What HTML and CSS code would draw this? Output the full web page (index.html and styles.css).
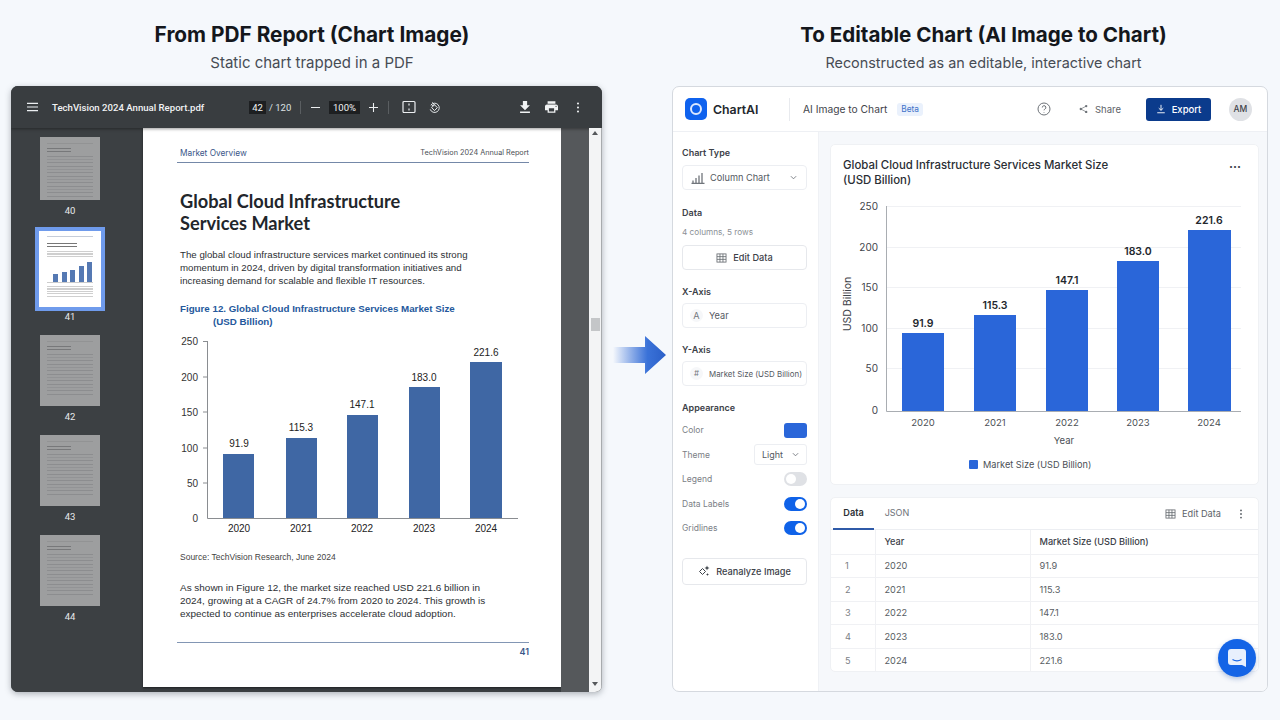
FILE: index.html

```html
<!DOCTYPE html>
<html lang="en">
<head>
  <meta charset="UTF-8">
  <title>From PDF Report to Editable Chart</title>
  <link rel="stylesheet" href="styles.css">
</head>
<body>
  <!-- Headings -->
  <div class="heads">
    <div class="head head-left">
      <h1>From PDF Report (Chart Image)</h1>
      <p>Static chart trapped in a PDF</p>
    </div>
    <div class="head head-right">
      <h1>To Editable Chart (AI Image to Chart)</h1>
      <p>Reconstructed as an editable, interactive chart</p>
    </div>
  </div>

  <div class="stage">
    <!-- PDF viewer -->
    <div class="viewer">
      <div class="viewer-bar">
        <svg class="menu-icon" viewBox="0 0 12 10"><path d="M0 1h12M0 5h12M0 9h12"/></svg>
        <span class="doc-name">TechVision 2024 Annual Report.pdf</span>
        <span class="page-box">42</span>
        <span class="page-total">/ 120</span>
        <span class="bar-sep"></span>
        <svg class="bar-icon minus" viewBox="0 0 10 10"><path d="M0 5h10"/></svg>
        <span class="zoom-box">100%</span>
        <svg class="bar-icon plus" viewBox="0 0 10 10"><path d="M0 5h10M5 0v10"/></svg>
        <span class="bar-sep sep-two"></span>
        <svg class="fit-icon" viewBox="0 0 14 14"><rect x="1" y="1.500" width="12" height="11" rx="1"/><path d="M7 3.500v2M7 8.500v2"/></svg>
        <svg class="rotate-icon" viewBox="0 0 14 14"><path d="M3 4.500a5 5 0 1 1-.6 4.500"/><path d="M4.500 1.500L7 3.800 4 5.200"/><rect x="4.800" y="5" width="4.400" height="4.400" transform="rotate(45 7 7.200)"/></svg>
        <div class="bar-right">
          <svg class="fill-icon" viewBox="5 3 14 17"><path d="M19 9h-4V3H9v6H5l7 7 7-7zM5 18v2h14v-2H5z"/></svg>
          <svg class="fill-icon print" viewBox="2 3 20 18"><path d="M19 8H5c-1.660 0-3 1.340-3 3v6h4v4h12v-4h4v-6c0-1.660-1.340-3-3-3zm-3 11H8v-5h8v5zm3-7c-.550 0-1-.450-1-1s.450-1 1-1 1 .450 1 1-.450 1-1 1zm-1-9H6v4h12V3z"/></svg>
          <svg class="fill-icon dots" viewBox="0 0 4 14"><circle cx="2" cy="2" r="1.300"/><circle cx="2" cy="7" r="1.300"/><circle cx="2" cy="12" r="1.300"/></svg>
        </div>
      </div>

      <div class="viewer-body">
        <!-- Thumbnails -->
        <div class="thumbs">
          <div class="thumb-item first">
            <div class="thumb"><span class="thumb-head"></span><span class="thumb-title"></span><span class="thumb-lines"></span></div>
            <span class="thumb-num">40</span>
          </div>
          <div class="thumb-item selected">
            <div class="thumb-sel">
              <span class="mini-head"></span>
              <span class="mini-title"></span>
              <span class="mini-text"></span>
              <div class="mini-bars">
                <i class="mb1"></i><i class="mb2"></i><i class="mb3"></i><i class="mb4"></i><i class="mb5"></i>
              </div>
              <span class="mini-text"></span>
            </div>
            <span class="thumb-num">41</span>
          </div>
          <div class="thumb-item">
            <div class="thumb"><span class="thumb-head"></span><span class="thumb-title"></span><span class="thumb-lines"></span></div>
            <span class="thumb-num">42</span>
          </div>
          <div class="thumb-item">
            <div class="thumb"><span class="thumb-head"></span><span class="thumb-title"></span><span class="thumb-lines"></span></div>
            <span class="thumb-num">43</span>
          </div>
          <div class="thumb-item">
            <div class="thumb"><span class="thumb-head"></span><span class="thumb-title"></span><span class="thumb-lines"></span></div>
            <span class="thumb-num">44</span>
          </div>
        </div>

        <!-- PDF page -->
        <div class="pdf-page">
          <div class="pdf-head">
            <span class="pdf-section">Market Overview</span>
            <span class="pdf-runner">TechVision 2024 Annual Report</span>
          </div>
          <div class="pdf-content">
            <h2>Global Cloud Infrastructure<br>Services Market</h2>
            <p class="pdf-text">The global cloud infrastructure services market continued its strong<br>momentum in 2024, driven by digital transformation initiatives and<br>increasing demand for scalable and flexible IT resources.</p>
            <h3>Figure 12. Global Cloud Infrastructure Services Market Size<br><span class="fig-indent">(USD Billion)</span></h3>
            <svg class="pdf-chart" viewBox="175 335 350 205">
              <path class="pdf-axis" d="M207.500 341V518.500H518M203 341.500h4M203 377h4M203 412h4M203 448h4M203 483h4"/>
              <g class="pdf-ticks">
                <text x="198" y="345">250</text>
                <text x="198" y="381">200</text>
                <text x="198" y="416">150</text>
                <text x="198" y="452">100</text>
                <text x="198" y="487">50</text>
                <text x="198" y="522">0</text>
              </g>
              <g class="pdf-bars">
                <rect x="223" y="454" width="31" height="64"/>
                <rect x="286" y="438" width="31" height="80"/>
                <rect x="347" y="415" width="31" height="103"/>
                <rect x="409" y="387" width="31" height="131"/>
                <rect x="470" y="362" width="32" height="156"/>
              </g>
              <g class="pdf-labels">
                <text x="239" y="447">91.9</text>
                <text x="301" y="431">115.3</text>
                <text x="362" y="408">147.1</text>
                <text x="424" y="381">183.0</text>
                <text x="486" y="356">221.6</text>
                <text x="239" y="532">2020</text>
                <text x="301" y="532">2021</text>
                <text x="362" y="532">2022</text>
                <text x="424" y="532">2023</text>
                <text x="486" y="532">2024</text>
              </g>
            </svg>
            <p class="pdf-source">Source: TechVision Research, June 2024</p>
            <p class="pdf-text">As shown in Figure 12, the market size reached USD 221.6 billion in<br>2024, growing at a CAGR of 24.7% from 2020 to 2024. This growth is<br>expected to continue as enterprises accelerate cloud adoption.</p>
          </div>
          <div class="pdf-foot">41</div>
        </div>

        <div class="gutter"></div>

        <div class="scrollbar">
          <span class="arrow-up"></span>
          <span class="scroll-thumb"></span>
          <span class="arrow-down"></span>
        </div>
      </div>
    </div>

    <!-- Arrow between the two -->
    <svg class="big-arrow" viewBox="0 0 53 38">
      <defs>
        <linearGradient id="arrow-fade" x1="0" x2="1" y1="0" y2="0">
          <stop offset="0" stop-color="#2f69d6" stop-opacity="0"/>
          <stop offset="0.65" stop-color="#3a72d8"/>
          <stop offset="1" stop-color="#2a5fc8"/>
        </linearGradient>
      </defs>
      <path fill="url(#arrow-fade)" d="M0 11H32V0L53 19 32 38V27H0Z"/>
    </svg>

    <!-- ChartAI app -->
    <div class="app">
      <div class="app-bar">
        <div class="logo"><span class="logo-ring"></span></div>
        <span class="brand">ChartAI</span>
        <span class="app-sep"></span>
        <span class="app-title">AI Image to Chart</span>
        <span class="beta">Beta</span>
        <div class="app-actions">
          <svg class="help" viewBox="0 0 14 14"><circle cx="7" cy="7" r="6"/><path d="M5.300 5.500a1.800 1.800 0 1 1 2.600 1.600c-.6.300-.9.600-.9 1.200M7 10v.6"/></svg>
          <svg class="share-icon" viewBox="0 0 10 10"><path class="share-line" d="M8 1.800L2 5l6 3.200"/><circle cx="8" cy="1.800" r="1.300"/><circle cx="2" cy="5" r="1.300"/><circle cx="8" cy="8.200" r="1.300"/></svg>
          <span class="share">Share</span>
          <button class="export">
            <svg viewBox="0 0 12 12"><path d="M6 1v6.500M3.300 5L6 7.600 8.700 5M1.500 10.500h9"/></svg>
            Export
          </button>
          <span class="avatar">AM</span>
        </div>
      </div>

      <div class="app-body">
        <!-- Settings -->
        <div class="side">
          <div class="side-label">Chart Type</div>
          <div class="field field-select">
            <svg class="col-icon" viewBox="0 0 13 12"><path d="M1.500 11V8.500M4.500 11V6M7.500 11V3.500M10.500 11V1"/><path d="M0 11.500h13"/></svg>
            <span>Column Chart</span>
            <svg class="chev" viewBox="0 0 8 5"><path d="M1 1l3 3 3-3"/></svg>
          </div>
          <div class="side-label label-data">Data</div>
          <div class="side-note">4 columns, 5 rows</div>
          <button class="side-btn">
            <svg class="grid-icon" viewBox="0 0 12 11"><rect x="1" y="1" width="10" height="9"/><path d="M1 4h10M1 7h10M4.300 1v9M7.600 1v9"/></svg>
            Edit Data
          </button>
          <div class="side-label label-axis">X-Axis</div>
          <div class="field field-axis"><b>A</b><span>Year</span></div>
          <div class="side-label label-axis">Y-Axis</div>
          <div class="field field-axis small"><b>#</b><span>Market Size (USD Billion)</span></div>
          <div class="side-label label-look">Appearance</div>
          <div class="look-row"><span>Color</span><i class="swatch"></i></div>
          <div class="look-row"><span>Theme</span>
            <div class="theme-select">Light <svg class="chev" viewBox="0 0 8 5"><path d="M1 1l3 3 3-3"/></svg></div>
          </div>
          <div class="look-row"><span>Legend</span><i class="toggle"></i></div>
          <div class="look-row"><span>Data Labels</span><i class="toggle on"></i></div>
          <div class="look-row"><span>Gridlines</span><i class="toggle on"></i></div>
          <button class="side-btn reanalyze">
            <svg class="spark" viewBox="0 0 12 12"><path d="M4.500 3.500L7.500 6.500 4.500 9.500 1.500 6.500Z"/><path class="spark-fill" d="M9 .5l.7 1.800 1.800.7-1.800.7L9 5.500l-.7-1.800L6.500 3l1.800-.7zM9.500 8l.4 1.100 1.100.4-1.100.4-.4 1.100-.4-1.100L8 9.500l1.100-.4z"/></svg>
            Reanalyze Image
          </button>
        </div>

        <div class="content">
          <!-- Chart card -->
          <div class="card chart-card">
            <div class="chart-head">
              <h4>Global Cloud Infrastructure Services Market Size<br>(USD Billion)</h4>
              <span class="more">...</span>
            </div>
            <svg class="app-chart" viewBox="830 196 428 284">
              <path class="grid" d="M886 206.500H1241M886 247.500H1241M886 287.500H1241M886 328.500H1241M886 368.500H1241"/>
              <path class="axis" d="M886.500 206V411.500H1241"/>
              <g class="ticks">
                <text x="878" y="210">250</text>
                <text x="878" y="251">200</text>
                <text x="878" y="291">150</text>
                <text x="878" y="332">100</text>
                <text x="878" y="372">50</text>
                <text x="878" y="414">0</text>
              </g>
              <text class="axis-title" transform="translate(851 304) rotate(-90)">USD Billion</text>
              <g class="bars">
                <rect x="902" y="333" width="42" height="78"/>
                <rect x="974" y="315" width="42" height="96"/>
                <rect x="1046" y="290" width="42" height="121"/>
                <rect x="1117" y="261" width="42" height="150"/>
                <rect x="1188" y="230" width="43" height="181"/>
              </g>
              <g class="bar-labels">
                <text x="923" y="327">91.9</text>
                <text x="995" y="309">115.3</text>
                <text x="1067" y="284">147.1</text>
                <text x="1138" y="255">183.0</text>
                <text x="1209" y="224">221.6</text>
              </g>
              <g class="x-labels">
                <text x="923" y="426">2020</text>
                <text x="995" y="426">2021</text>
                <text x="1067" y="426">2022</text>
                <text x="1138" y="426">2023</text>
                <text x="1209" y="426">2024</text>
                <text x="1064" y="444">Year</text>
              </g>
              <rect x="969" y="460" width="9" height="9" rx="1" fill="#2a66d9"/>
              <text class="legend-text" x="983" y="468">Market Size (USD Billion)</text>
            </svg>
          </div>

          <!-- Data table -->
          <div class="card table-card">
            <div class="tabs">
              <span class="tab active">Data</span>
              <span class="tab">JSON</span>
              <div class="tab-actions">
                <svg class="grid-icon" viewBox="0 0 12 11"><rect x="1" y="1" width="10" height="9"/><path d="M1 4h10M1 7h10M4.300 1v9M7.600 1v9"/></svg>
                <span>Edit Data</span>
                <svg class="fill-icon tab-dots" viewBox="0 0 4 14"><circle cx="2" cy="2" r="1.300"/><circle cx="2" cy="7" r="1.300"/><circle cx="2" cy="12" r="1.300"/></svg>
              </div>
            </div>
            <table>
              <thead>
                <tr><th class="col-n"></th><th class="col-y">Year</th><th>Market Size (USD Billion)</th></tr>
              </thead>
              <tbody>
                <tr><td class="col-n">1</td><td>2020</td><td>91.9</td></tr>
                <tr><td class="col-n">2</td><td>2021</td><td>115.3</td></tr>
                <tr><td class="col-n">3</td><td>2022</td><td>147.1</td></tr>
                <tr><td class="col-n">4</td><td>2023</td><td>183.0</td></tr>
                <tr><td class="col-n">5</td><td>2024</td><td>221.6</td></tr>
              </tbody>
            </table>
          </div>
        </div>
      </div>

      <!-- Chat bubble -->
      <div class="chat">
        <svg viewBox="0 0 18 18"><path class="chat-shape" d="M3 0h12a3 3 0 0 1 3 3v15l-4-2H3a3 3 0 0 1-3-3V3a3 3 0 0 1 3-3z"/><path class="chat-smile" d="M4.500 10.500c2.500 1.500 6.500 1.500 9 0"/></svg>
      </div>
    </div>
  </div>
</body>
</html>
```

FILE: styles.css

```css
* {
  box-sizing: border-box;
}
body {
  margin: 0;
  height: 720px;
  overflow: hidden;
  background: #f5f8fc;
  font-family: Inter, "Liberation Sans", sans-serif;
  color: #1f2328;
}
svg {
  display: block;
  flex: none;
}

/* Headings */
.heads {
  display: flex;
  height: 86px;
  padding-top: 22px;
}
.head {
  text-align: center;
}
.head-left {
  width: 624px;
}
.head-right {
  width: 656px;
  padding-left: 63px;
}
.head h1 {
  margin: 0;
  font-size: 20.600px;
  line-height: 25px;
  font-weight: 700;
  color: #14171c;
}
.head-left h1 {
  font-size: 20.800px;
}
.head p {
  margin: 7px 0 0;
  font-size: 15px;
  line-height: 18px;
  color: #474c54;
}
.head-right p {
  font-size: 14.400px;
}

.stage {
  display: flex;
  align-items: flex-start;
  padding-left: 11px;
}

/* PDF viewer */
.viewer {
  width: 591px;
  height: 606px;
  border-radius: 7px;
  overflow: hidden;
  background: #3b3f42;
  box-shadow: 0 2px 6px rgba(40, 50, 60, 0.35);
  font-family: Roboto, "Liberation Sans", sans-serif;
}
.viewer-bar {
  display: flex;
  align-items: center;
  height: 42px;
  padding: 0 22px 0 16px;
  background: #393d40;
  color: #f1f3f4;
  box-shadow: 0 1px 3px rgba(0, 0, 0, 0.4);
  position: relative;
}
.menu-icon {
  width: 11px;
  height: 10px;
  fill: none;
  stroke: #eceff1;
  stroke-width: 1.200;
}
.doc-name {
  margin-left: 14px;
  width: 197px;
  font-size: 9.600px;
  font-weight: 500;
  white-space: nowrap;
}
.page-box {
  width: 17px;
  height: 13px;
  background: #1d1f21;
  font-size: 9.500px;
  line-height: 13px;
  text-align: center;
}
.page-total {
  width: 21px;
  margin-left: 3px;
  font-size: 9.500px;
  color: #dfe2e4;
  white-space: nowrap;
}
.bar-sep {
  width: 1px;
  height: 13px;
  margin: 0 10px 0 10px;
  background: #5a5e61;
}
.bar-icon {
  width: 9px;
  height: 9px;
  fill: none;
  stroke: #eceff1;
  stroke-width: 1.200;
}
.zoom-box {
  width: 31px;
  height: 13px;
  margin: 0 9px;
  background: #1d1f21;
  font-size: 9.500px;
  line-height: 13px;
  text-align: center;
}
.sep-two {
  margin: 0 13px 0 10px;
}
.fit-icon {
  width: 14px;
  height: 14px;
  fill: none;
  stroke: #eceff1;
  stroke-width: 1.200;
}
.rotate-icon {
  width: 13px;
  height: 13px;
  margin-left: 12px;
  fill: none;
  stroke: #eceff1;
  stroke-width: 1;
}
.bar-right {
  margin-left: auto;
  display: flex;
  align-items: center;
}
.fill-icon {
  width: 10px;
  height: 12px;
  fill: #f1f3f4;
}
.print {
  width: 13px;
  height: 12px;
  margin-left: 15px;
}
.dots {
  width: 4px;
  height: 11px;
  margin-left: 18px;
}

.viewer-body {
  display: flex;
  height: 564px;
}
.thumbs {
  width: 132px;
  padding: 9px 14px 0 0;
  display: flex;
  flex-direction: column;
  align-items: center;
  gap: 12px;
  background: #3c4043;
}
.thumb-item {
  display: flex;
  flex-direction: column;
  align-items: center;
}
.thumb-item.first {
  margin-bottom: -2px;
}
.thumb-item.first .thumb {
  height: 63px;
}
.thumb {
  width: 60px;
  height: 71px;
  padding: 6px 7px;
  background: #9d9e9f;
  overflow: hidden;
}
.thumb-head {
  display: block;
  height: 1px;
  background: #929394;
}
.thumb-title {
  display: block;
  width: 24px;
  height: 5px;
  margin-top: 4px;
  background: repeating-linear-gradient(#77787a 0 1px, transparent 1px 3px);
}
.thumb-lines {
  display: block;
  height: 42px;
  margin-top: 3px;
  background: repeating-linear-gradient(#8c8d8f 0 1px, transparent 1px 3px, #929395 3px 4px, transparent 4px 6px, #8c8d8f 6px 7px, transparent 7px 10px);
}
.thumb-num {
  margin-top: 5px;
  font-size: 9.500px;
  line-height: 12px;
  color: #e8eaeb;
}
.thumb-sel {
  width: 70px;
  height: 84px;
  padding: 5px 8px;
  background: #fff;
  border: 4px solid #6f9bec;
}
.selected .thumb-num {
  margin-top: 0;
}
.mini-head {
  display: block;
  height: 1px;
  background: #c6cdd9;
}
.mini-title {
  display: block;
  width: 30px;
  height: 5px;
  margin-top: 6px;
  background: repeating-linear-gradient(#777 0 1px, transparent 1px 3px);
}
.mini-text {
  display: block;
  height: 7px;
  margin-top: 3px;
  background: repeating-linear-gradient(#cfcfcf 0 1px, transparent 1px 2.500px);
}
.mini-bars + .mini-text {
  height: 12px;
}
.mini-bars {
  display: flex;
  align-items: flex-end;
  gap: 3.500px;
  height: 21px;
  margin-top: 4px;
  padding-left: 6px;
  border-bottom: 1px solid #ccc;
}
.mini-bars i {
  width: 5px;
  background: #5579b3;
}
.mb1 { height: 8px; }
.mb2 { height: 10px; }
.mb3 { height: 12px; }
.mb4 { height: 16px; }
.mb5 { height: 20px; }

/* PDF page */
.pdf-page {
  width: 418px;
  height: 559px;
  padding: 0 32px 0 34px;
  background: #fff;
  box-shadow: 0 1px 2px rgba(0, 0, 0, 0.5);
  font-family: "Liberation Sans", sans-serif;
}
.pdf-head {
  display: flex;
  justify-content: space-between;
  align-items: flex-end;
  height: 35px;
  padding: 0 0 3px 3px;
  border-bottom: 1px solid #7488a8;
}
.pdf-section {
  font-family: Inter, sans-serif;
  font-size: 8.300px;
  line-height: 12px;
  color: #3a5688;
}
.pdf-runner {
  font-family: Inter, sans-serif;
  font-size: 7.300px;
  line-height: 12px;
  color: #4b4f55;
}
.pdf-content {
  padding-left: 3px;
  color: #2c2f33;
}
.pdf-content h2 {
  margin: 27px 0 0;
  font-family: Lato, sans-serif;
  font-size: 18.200px;
  line-height: 22px;
  font-weight: 700;
  color: #22262b;
}
.pdf-text {
  margin: 14px 0 0;
  font-size: 9.700px;
  line-height: 13px;
}
.pdf-content h3 {
  margin: 15px 0 0;
  font-size: 9.750px;
  line-height: 13px;
  font-weight: 700;
  color: #24589c;
}
.fig-indent {
  margin-left: 33px;
}
.pdf-chart {
  width: 350px;
  height: 205px;
  margin: 7px 0 0 -5px;
}
.pdf-axis {
  fill: none;
  stroke: #8a8d91;
  stroke-width: 1;
}
.pdf-ticks text {
  text-anchor: end;
  font-size: 10px;
  fill: #333;
}
.pdf-bars rect {
  fill: #3f67a4;
}
.pdf-labels text {
  text-anchor: middle;
  font-size: 10px;
  fill: #222;
}
.pdf-source {
  margin: 11px 0 0;
  font-size: 8.500px;
  line-height: 12px;
  color: #444;
}
.pdf-source + .pdf-text {
  margin-top: 18px;
  font-size: 9.950px;
}
.pdf-foot {
  margin-top: 22px;
  padding-top: 3px;
  border-top: 1px solid #8296b4;
  text-align: right;
  font-family: Inter, sans-serif;
  font-size: 9px;
  font-weight: 600;
  line-height: 12px;
  color: #3a5688;
}

.gutter {
  width: 28px;
  background: #55585b;
}
.scrollbar {
  position: relative;
  width: 13px;
  background: #f3f4f5;
  border-right: 1px solid #a8abae;
}
.scroll-thumb {
  position: absolute;
  top: 190px;
  left: 2px;
  width: 9px;
  height: 13px;
  background: #c4c6c8;
}
.arrow-up,
.arrow-down {
  position: absolute;
  left: 3px;
  width: 0;
  height: 0;
  border-left: 3px solid transparent;
  border-right: 3px solid transparent;
}
.arrow-up {
  top: 3px;
  border-bottom: 4px solid #55585b;
}
.arrow-down {
  bottom: 6px;
  border-top: 4px solid #55585b;
}

.big-arrow {
  width: 53px;
  height: 38px;
  margin: 250px 6px 0 11px;
}

/* ChartAI app */
.app {
  position: relative;
  width: 596px;
  height: 606px;
  border: 1px solid #d5d9df;
  border-radius: 7px;
  background: #fff;
  overflow: hidden;
}
.app-bar {
  display: flex;
  align-items: center;
  height: 45px;
  padding: 0 15px 0 12px;
  border-bottom: 1px solid #eef0f4;
}
.logo {
  width: 22px;
  height: 22px;
  border-radius: 5px;
  background: #0f62ee;
  display: flex;
  align-items: center;
  justify-content: center;
}
.logo-ring {
  width: 12px;
  height: 12px;
  border: 2px solid #dbe8ff;
  border-radius: 50%;
}
.brand {
  width: 45px;
  margin-left: 6px;
  font-size: 12.300px;
  font-weight: 600;
  color: #23272d;
}
.app-sep {
  width: 1px;
  height: 23px;
  margin: 0 13px 0 31px;
  background: #e8eaee;
}
.app-title {
  font-size: 10.250px;
  color: #3f444b;
}
.beta {
  margin-left: 10px;
  padding: 1px 4px;
  border-radius: 3px;
  background: #eaf1fc;
  font-size: 8.300px;
  line-height: 11px;
  color: #3f73c9;
}
.app-actions {
  margin-left: auto;
  display: flex;
  align-items: center;
}
.help {
  width: 14px;
  height: 14px;
  fill: none;
  stroke: #6d7278;
  stroke-width: 1;
}
.share-icon {
  width: 9px;
  height: 10px;
  margin-left: 28px;
  fill: #6d7278;
}
.share-line {
  fill: none;
  stroke: #6d7278;
  stroke-width: 0.800;
}
.share {
  margin-left: 7px;
  font-size: 9.500px;
  color: #5d6268;
}
.export {
  display: flex;
  align-items: center;
  justify-content: center;
  gap: 6px;
  width: 65px;
  height: 23px;
  margin-left: 25px;
  border: none;
  border-radius: 3px;
  background: #0b3b8c;
  color: #fff;
  font-family: inherit;
  font-size: 9.500px;
  font-weight: 500;
}
.export svg {
  width: 10px;
  height: 10px;
  fill: none;
  stroke: #fff;
  stroke-width: 1.100;
}
.avatar {
  width: 23px;
  height: 23px;
  margin-left: 18px;
  border-radius: 50%;
  background: #dfe1e5;
  font-size: 8.500px;
  font-weight: 500;
  line-height: 23px;
  text-align: center;
  color: #3f444b;
}

.app-body {
  display: flex;
  height: 559px;
}
.side {
  flex: none;
  width: 146px;
  padding: 15px 11px 0 9px;
  border-right: 1px solid #eff1f5;
}
.side-label {
  font-size: 9px;
  line-height: 12px;
  font-weight: 600;
  color: #3c4148;
}
.label-data {
  margin-top: 17px;
}
.label-axis {
  margin-top: 16px;
}
.label-look {
  margin-top: 16px;
}
.field {
  display: flex;
  align-items: center;
  height: 25px;
  margin-top: 5px;
  padding: 0 9px 0 7px;
  border: 1px solid #eceef2;
  border-radius: 4px;
  font-size: 9.200px;
  color: #54595f;
}
.field-select {
  margin-top: 6px;
}
.col-icon {
  width: 14px;
  height: 12px;
  margin: 0 5px 0 1px;
  fill: none;
  stroke: #70757b;
  stroke-width: 1.300;
}
.chev {
  width: 7px;
  height: 5px;
  margin-left: auto;
  fill: none;
  stroke: #70757b;
  stroke-width: 1;
}
.side-note {
  margin-top: 7px;
  font-size: 8.200px;
  line-height: 12px;
  color: #8b9096;
}
.side-btn {
  display: flex;
  align-items: center;
  justify-content: center;
  gap: 6px;
  width: 125px;
  height: 25px;
  margin-top: 7px;
  background: #fff;
  border: 1px solid #e6e8ec;
  border-radius: 4px;
  font-family: inherit;
  font-size: 9.200px;
  font-weight: 500;
  color: #3c4148;
}
.grid-icon {
  width: 11px;
  height: 10px;
  fill: none;
  stroke: #64696f;
  stroke-width: 0.900;
}
.field-axis b {
  width: 13px;
  height: 13px;
  margin-right: 6px;
  border-radius: 50%;
  background: #f6f7f9;
  font-weight: 400;
  line-height: 13px;
  text-align: center;
  color: #73787e;
}
.field-axis.small {
  padding-right: 0;
  font-size: 7.900px;
  white-space: nowrap;
}
.look-row {
  display: flex;
  align-items: center;
  justify-content: space-between;
  height: 24.500px;
  font-size: 8.500px;
  color: #7b8086;
}
.label-look + .look-row {
  margin-top: 4px;
}
.swatch {
  width: 23px;
  height: 15px;
  border-radius: 3px;
  background: #2a66d9;
}
.theme-select {
  display: flex;
  align-items: center;
  width: 53px;
  height: 21px;
  padding: 0 7px;
  border: 1px solid #eceef2;
  border-radius: 3px;
  font-size: 9px;
  color: #54595f;
}
.toggle {
  position: relative;
  width: 23px;
  height: 14px;
  border-radius: 7px;
  background: #dfe1e5;
}
.toggle::after {
  content: "";
  position: absolute;
  top: 2px;
  left: 2px;
  width: 10px;
  height: 10px;
  border-radius: 50%;
  background: #fff;
}
.toggle.on {
  background: #0f62e8;
}
.toggle.on::after {
  left: 11px;
}
.reanalyze {
  height: 27px;
  margin-top: 17px;
}
.spark {
  width: 12px;
  height: 12px;
  fill: none;
  stroke: #3c4148;
  stroke-width: 1;
}
.spark-fill {
  fill: #3c4148;
  stroke: none;
}

.content {
  flex: 1;
  padding: 12px 9px 0 11px;
  background: #f6f8fb;
}
.card {
  background: #fff;
  border-radius: 5px;
  border: 1px solid #eff1f4;
}
.chart-card {
  height: 341px;
}
.chart-head {
  display: flex;
  justify-content: space-between;
  height: 51px;
  padding: 13px 17px 0 12px;
}
.chart-head h4 {
  margin: 0;
  font-size: 11.400px;
  line-height: 15px;
  font-weight: 500;
  color: #2a2e34;
}
.more {
  margin-top: 1px;
  font-size: 12px;
  line-height: 10px;
  font-weight: 700;
  color: #3c4148;
}
.app-chart {
  width: 428px;
  height: 284px;
  margin-left: -1px;
}
.grid {
  fill: none;
  stroke: #f0f1f4;
}
.axis {
  fill: none;
  stroke: #a9adb2;
}
.ticks text {
  text-anchor: end;
  font-size: 10px;
  fill: #3f444b;
}
.axis-title {
  text-anchor: middle;
  font-size: 10.500px;
  fill: #3f444b;
}
.bars rect {
  fill: #2a66d9;
}
.bar-labels text {
  text-anchor: middle;
  font-size: 10.500px;
  font-weight: 600;
  fill: #23272d;
}
.x-labels text {
  text-anchor: middle;
  font-size: 9.500px;
  fill: #4b5056;
}
.legend-text {
  font-size: 9.200px;
  fill: #4b5056;
}

.table-card {
  height: 175px;
  margin-top: 12px;
}
.tabs {
  display: flex;
  align-items: center;
  height: 32px;
  padding: 0 15px 0 2px;
  border-bottom: 1px solid #eceef2;
  font-size: 9.200px;
  color: #6d7278;
}
.tab {
  width: 41px;
  height: 32px;
  margin-right: 10px;
  line-height: 30px;
  text-align: center;
}
.tab + .tab {
  width: 26px;
  font-size: 9px;
}
.tab.active {
  font-weight: 600;
  color: #2a2e34;
  border-bottom: 2px solid #2f5aa8;
}
.tab-actions {
  margin-left: auto;
  display: flex;
  align-items: center;
  color: #5d6268;
}
.tab-actions span {
  margin-left: 6px;
}
.tab-dots {
  width: 4px;
  height: 10px;
  margin-left: 18px;
  fill: #5d6268;
}
table {
  width: 100%;
  border-collapse: collapse;
  table-layout: fixed;
  font-size: 9.200px;
}
th {
  height: 24px;
  padding: 0 0 0 9px;
  text-align: left;
  font-weight: 500;
  color: #3c4148;
  border-bottom: 1px solid #f0f1f4;
  border-left: 1px solid #f0f1f4;
}
td {
  height: 23.500px;
  padding: 0 0 0 9px;
  color: #585d63;
  border-bottom: 1px solid #f0f1f4;
  border-left: 1px solid #f0f1f4;
}
tr:last-child td {
  border-bottom: none;
}
.col-n {
  width: 44px;
  border-left: none;
  padding-left: 14px;
  color: #7b8086;
}
.col-y {
  width: 155px;
}

/* Chat bubble */
.chat {
  position: absolute;
  right: 11px;
  bottom: 14px;
  width: 38px;
  height: 38px;
  display: flex;
  align-items: center;
  justify-content: center;
  border-radius: 50%;
  background: #1464e6;
  box-shadow: 0 2px 5px rgba(20, 70, 160, 0.3);
}
.chat svg {
  width: 18px;
  height: 18px;
}
.chat-shape {
  fill: #e8f0fd;
}
.chat-smile {
  fill: none;
  stroke: #1464e6;
  stroke-width: 1.200;
}
```
